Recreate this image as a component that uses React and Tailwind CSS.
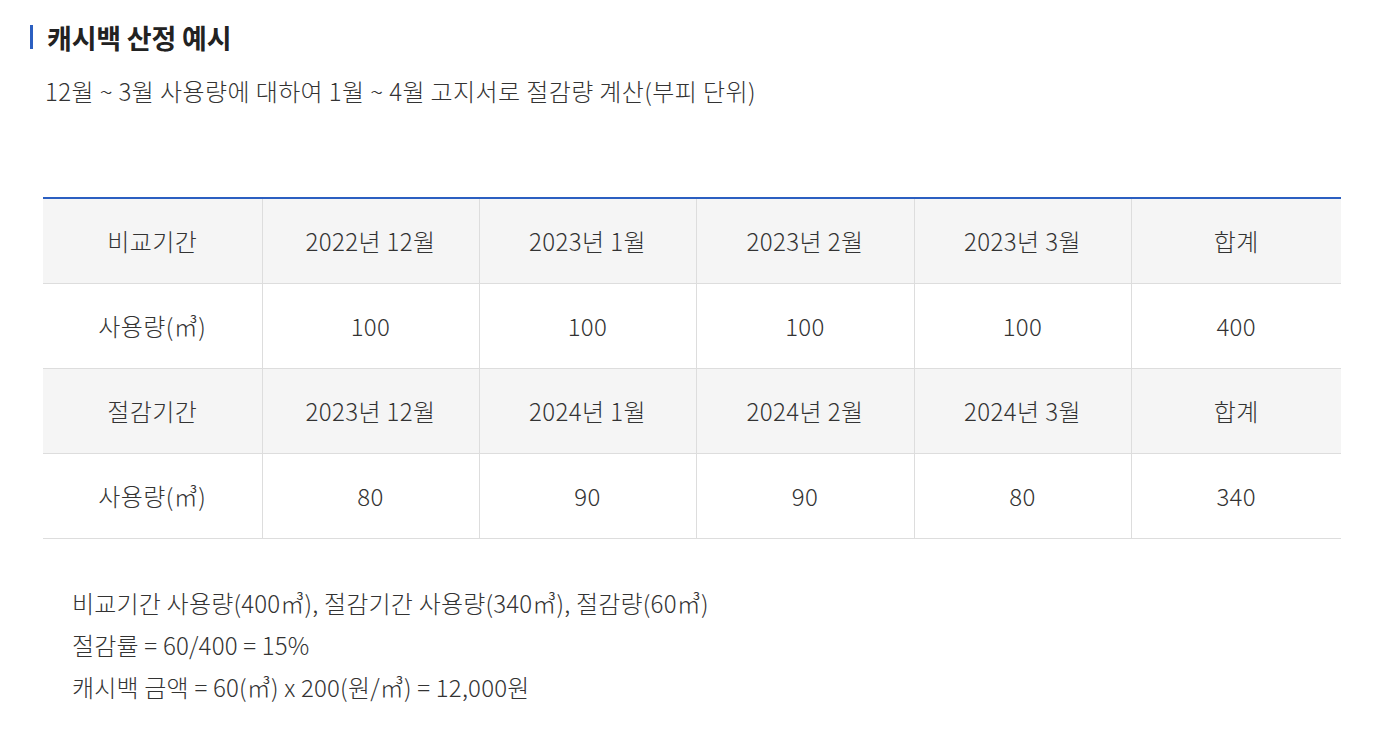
import React from 'react';

const rows = [
  { head: true, cells: ['비교기간', '2022년 12월', '2023년 1월', '2023년 2월', '2023년 3월', '합계'] },
  { head: false, cells: ['사용량(㎥)', '100', '100', '100', '100', '400'] },
  { head: true, cells: ['절감기간', '2023년 12월', '2024년 1월', '2024년 2월', '2024년 3월', '합계'] },
  { head: false, cells: ['사용량(㎥)', '80', '90', '90', '80', '340'] },
];

const widths = ['w-[219px]', 'w-[217px]', 'w-[217px]', 'w-[218px]', 'w-[217px]', 'w-[210px]'];

const App = () => {
  return (
    <div className="min-h-screen bg-white text-[#333] font-light font-['Noto_Sans_CJK_KR','Noto_Sans',sans-serif]">
      <div className="pt-[22px] pl-[30px] pr-[46px]">
        {/* Title */}
        <div className="flex items-center h-[30px]">
          <span className="w-[3px] h-[24px] bg-[#2b5fc1]" />
          <h2 className="ml-[14px] text-[27px] font-bold text-[#222] leading-none tracking-[-0.2px]">캐시백 산정 예시</h2>
        </div>
        <p className="mt-[24px] ml-[15px] text-[24px] leading-[30px] tracking-[0.4px]">
          12월 ~ 3월 사용량에 대하여 1월 ~ 4월 고지서로 절감량 계산(부피 단위)
        </p>

        {/* Table */}
        <table className="mt-[91px] ml-[13px] border-collapse border-t-2 border-t-[#2b5fc1] text-[24px] tracking-[0.4px]">
          <tbody>
            {rows.map((row, i) => (
              <tr key={i} className={row.head ? 'bg-[#f5f5f5]' : 'bg-white'}>
                {row.cells.map((c, j) => (
                  <td
                    key={j}
                    className={`${widths[j]} h-[85px] p-0 text-center border-b border-[#dddddd] ${j > 0 ? 'border-l' : ''}`}
                  >
                    {c}
                  </td>
                ))}
              </tr>
            ))}
          </tbody>
        </table>

        {/* Notes */}
        <div className="mt-[43px] ml-[42px] text-[24px] leading-[42px] tracking-[0.2px]">
          <p>비교기간 사용량(400㎥), 절감기간 사용량(340㎥), 절감량(60㎥)</p>
          <p>절감률 = 60/400 = 15%</p>
          <p>캐시백 금액 = 60(㎥) x 200(원/㎥) = 12,000원</p>
        </div>
      </div>
    </div>
  );
};

export default App;
